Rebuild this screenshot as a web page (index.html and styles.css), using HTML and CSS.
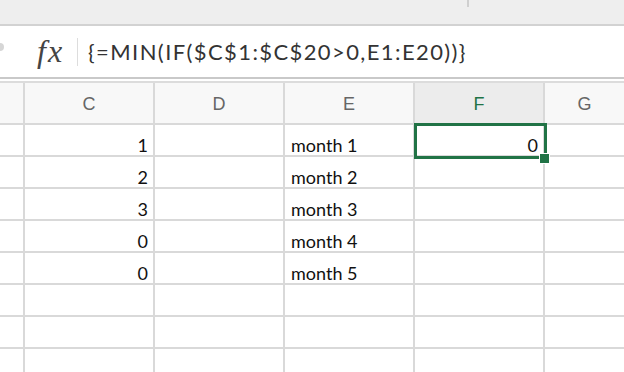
FILE: index.html
```html
<!DOCTYPE html>
<html>
<head>
<meta charset="utf-8">
<link rel="stylesheet" href="styles.css">
</head>
<body>
<div class="topbar"><span class="tick"></span></div>
<div class="formula-bar">
  <span class="stub"></span>
  <span class="fx">fx</span>
  <span class="sep"></span>
  <span class="formula">{=MIN(IF($C$1:$C$20&gt;0,E1:E20))}</span>
</div>
<div class="sheet">
  <div class="hd"></div>
  <div class="hd">C</div>
  <div class="hd">D</div>
  <div class="hd">E</div>
  <div class="hd active">F</div>
  <div class="hd">G</div>

  <div class="c"></div><div class="c num">1</div><div class="c"></div><div class="c">month 1</div><div class="c num sel">0</div><div class="c"></div>
  <div class="c"></div><div class="c num">2</div><div class="c"></div><div class="c">month 2</div><div class="c"></div><div class="c"></div>
  <div class="c"></div><div class="c num">3</div><div class="c"></div><div class="c">month 3</div><div class="c"></div><div class="c"></div>
  <div class="c"></div><div class="c num">0</div><div class="c"></div><div class="c">month 4</div><div class="c"></div><div class="c"></div>
  <div class="c"></div><div class="c num">0</div><div class="c"></div><div class="c">month 5</div><div class="c"></div><div class="c"></div>
  <div class="c"></div><div class="c"></div><div class="c"></div><div class="c"></div><div class="c"></div><div class="c"></div>
  <div class="c"></div><div class="c"></div><div class="c"></div><div class="c"></div><div class="c"></div><div class="c"></div>
  <div class="c"></div><div class="c"></div><div class="c"></div><div class="c"></div><div class="c"></div><div class="c"></div>
</div>
</body>
</html>
```
FILE: styles.css
```css
html, body {
  margin: 0;
  padding: 0;
  width: 624px;
  height: 372px;
  overflow: hidden;
  background: #ffffff;
  font-family: "Lato", "Liberation Sans", sans-serif;
}

.topbar {
  height: 24px;
  background: #eeeeee;
  border-bottom: 2px solid #d2d2d2;
  position: relative;
}

.tick {
  position: absolute;
  left: 467px;
  top: 0;
  width: 2px;
  height: 7px;
  background: #cfcfcf;
}

.formula-bar {
  height: 51px;
  display: flex;
  align-items: center;
  background: #ffffff;
  border-bottom: 2px solid #c9c9c9;
  position: relative;
}

.stub {
  position: absolute;
  left: -4px;
  top: 17px;
  width: 8px;
  height: 8px;
  border-radius: 50%;
  background: #d6d6d6;
}

.fx {
  font-family: "Liberation Serif", serif;
  font-style: italic;
  font-size: 32px;
  letter-spacing: 2px;
  color: #444444;
  margin-left: 37px;
  line-height: 1;
  margin-top: -2px;
}

.sep {
  width: 1px;
  height: 28px;
  background: #dddddd;
  margin-left: 13px;
  margin-right: 10px;
}

.formula {
  font-size: 22px;
  color: #333333;
  letter-spacing: 1.4px;
  margin-top: 0;
}

.sheet {
  margin-top: 2px;
  border-top: 2px solid #dcdcdc;
  display: grid;
  grid-template-columns: 23px 128px 128px 128px 128px 1fr;
  grid-template-rows: 40px repeat(8, 30px);
  gap: 2px;
  background: #d9d9d9;
}

.hd {
  background: #f8f8f8;
  color: #666666;
  font-family: "Liberation Sans", sans-serif;
  font-size: 18px;
  display: flex;
  align-items: center;
  justify-content: center;
  padding-top: 2px;
}

.hd.active {
  background: #ececec;
  color: #217346;
}

.c {
  background: #ffffff;
  color: #111111;
  font-size: 18px;
  display: flex;
  align-items: flex-end;
  padding: 0 5px 1px 6px;
  line-height: 1;
}

.c.num {
  justify-content: flex-end;
}

.sel {
  position: relative;
}

.sel::before {
  content: "";
  position: absolute;
  left: -1px;
  top: -2px;
  right: -4px;
  bottom: -4px;
  border: 3px solid #217346;
}

.sel::after {
  content: "";
  position: absolute;
  right: -7px;
  bottom: -9px;
  width: 9px;
  height: 9px;
  background: #217346;
  border: 1px solid #ffffff;
}
```
